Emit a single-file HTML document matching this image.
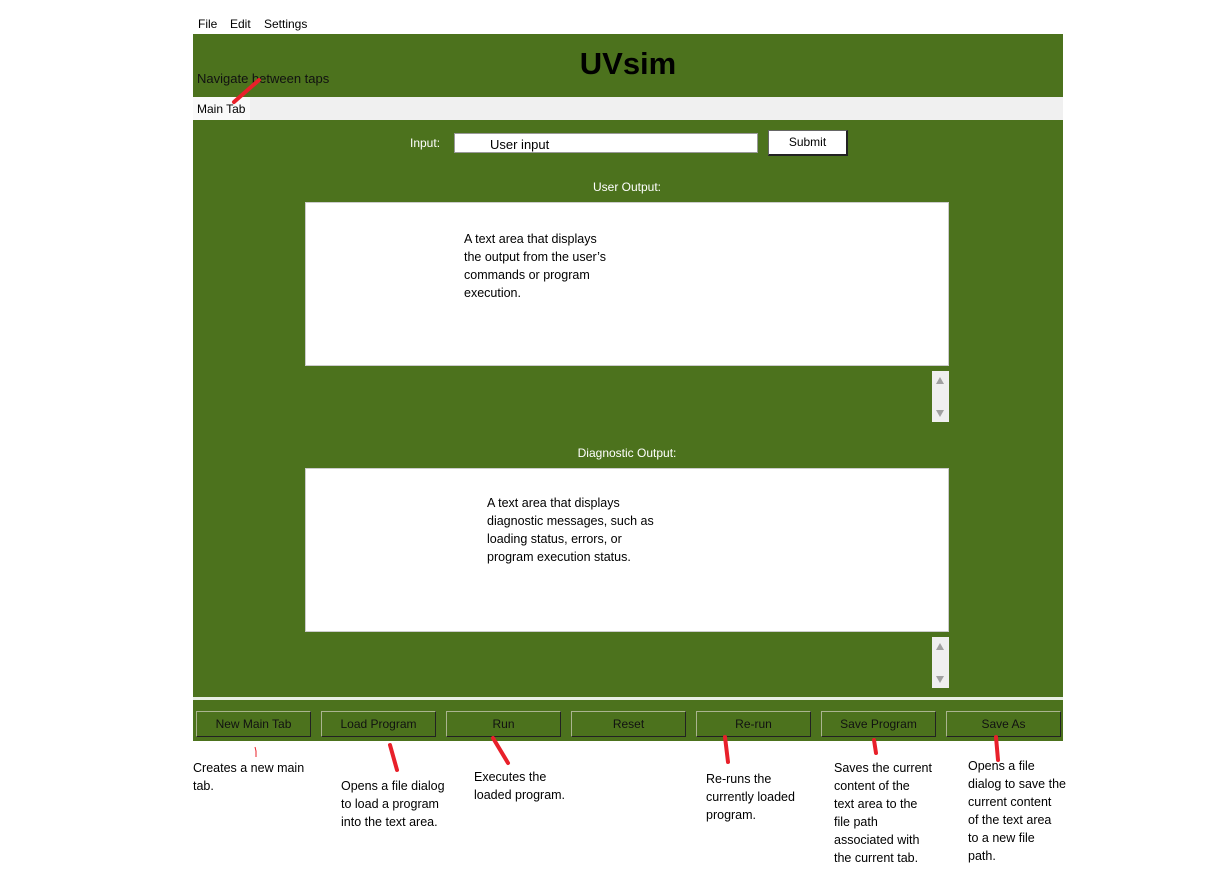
<!DOCTYPE html>
<html><head><meta charset="utf-8"><style>
body{margin:0;width:1228px;height:878px;background:#fff;position:relative;overflow:hidden;font-family:"Liberation Sans",sans-serif;}
div{position:absolute;box-sizing:border-box}
.g{background:#4c721d}
.t{font-size:12px;color:#000;white-space:nowrap}
.a{font-size:12.5px;line-height:18px;color:#000;white-space:nowrap}
.btn{top:711px;width:115px;height:26px;border:1px solid #222;border-top-color:#aab48f;border-left-color:#aab48f;background:#4c721d;font-size:12px;text-align:center;line-height:24px;color:#111}
.sb{width:17px;background:#efefef}
.up{left:4px;top:6px;width:0;height:0;border-left:4.5px solid transparent;border-right:4.5px solid transparent;border-bottom:7px solid #a0a0a0}
.dn{left:4px;bottom:5px;width:0;height:0;border-left:4.5px solid transparent;border-right:4.5px solid transparent;border-top:7px solid #a0a0a0}
</style></head><body>
<div style="left:193px;top:14px;width:870px;height:20px;background:#fff"></div>
<div class="t" style="left:198px;top:17px">File</div>
<div class="t" style="left:230px;top:17px">Edit</div>
<div class="t" style="left:264px;top:17px">Settings</div>
<div class="g" style="left:193px;top:34px;width:870px;height:63px"></div>
<div style="left:193px;top:46px;width:870px;text-align:center;font-size:31px;font-weight:bold;color:#000">UVsim</div>
<div style="left:197px;top:71px;font-size:13px;color:#111">Navigate between taps</div>
<div style="left:193px;top:97px;width:870px;height:23px;background:#f0f0f0"></div>
<div style="left:193px;top:97px;width:57px;height:23px;background:#f9f9f9"></div>
<div class="t" style="left:197px;top:102px">Main Tab</div>
<div class="g" style="left:193px;top:120px;width:870px;height:577px"></div>
<div class="t" style="left:410px;top:136px;color:#fff">Input:</div>
<div style="left:454px;top:133px;width:304px;height:20px;background:#fff;border:1px solid #999"></div>
<div style="left:490px;top:137px;font-size:13px">User input</div>
<div style="left:768px;top:130px;width:80px;height:26px;background:#fff;border:1px solid #666;border-right:2px solid #222;border-bottom:2px solid #222;font-size:12px;text-align:center;line-height:23px">Submit</div>
<div class="t" style="left:0;width:1254px;text-align:center;top:180px;color:#fff">User Output:</div>
<div style="left:305px;top:202px;width:644px;height:164px;background:#fff;border:1px solid #ccc"></div>
<div class="a" style="left:464px;top:230px">A text area that displays<br>the output from the user’s<br>commands or program<br>execution.</div>
<div class="sb" style="left:932px;top:371px;height:51px"><div class="up"></div><div class="dn"></div></div>
<div class="t" style="left:0;width:1254px;text-align:center;top:446px;color:#fff">Diagnostic Output:</div>
<div style="left:305px;top:468px;width:644px;height:164px;background:#fff;border:1px solid #ccc"></div>
<div class="a" style="left:487px;top:494px">A text area that displays<br>diagnostic messages, such as<br>loading status, errors, or<br>program execution status.</div>
<div class="sb" style="left:932px;top:637px;height:51px"><div class="up"></div><div class="dn"></div></div>
<div style="left:193px;top:697px;width:870px;height:3px;background:#e8eee4"></div>
<div class="g" style="left:193px;top:700px;width:870px;height:41px"></div>
<div class="btn" style="left:196px">New Main Tab</div>
<div class="btn" style="left:321px">Load Program</div>
<div class="btn" style="left:446px">Run</div>
<div class="btn" style="left:571px">Reset</div>
<div class="btn" style="left:696px">Re-run</div>
<div class="btn" style="left:821px">Save Program</div>
<div class="btn" style="left:946px">Save As</div>
<div class="a" style="left:193px;top:759px">Creates a new main<br>tab.</div>
<div class="a" style="left:341px;top:777px">Opens a file dialog<br>to load a program<br>into the text area.</div>
<div class="a" style="left:474px;top:768px">Executes the<br>loaded program.</div>
<div class="a" style="left:706px;top:770px">Re-runs the<br>currently loaded<br>program.</div>
<div class="a" style="left:834px;top:759px">Saves the current<br>content of the<br>text area to the<br>file path<br>associated with<br>the current tab.</div>
<div class="a" style="left:968px;top:757px">Opens a file<br>dialog to save the<br>current content<br>of the text area<br>to a new file<br>path.</div>
<svg style="position:absolute;left:0;top:0" width="1228" height="878">
<g stroke="#e8202a" stroke-width="4" stroke-linecap="round">
<line x1="259" y1="80" x2="234" y2="102"/>
<line x1="390" y1="745" x2="397" y2="770"/>
<line x1="493" y1="738" x2="508" y2="763"/>
<line x1="725" y1="737" x2="728" y2="762"/>
<line x1="874" y1="740" x2="876" y2="753"/>
<line x1="996" y1="737" x2="998" y2="760"/>
</g>
<path d="M255 747 l1 4 v6" stroke="#e8202a" stroke-width="1" fill="none"/>
</svg>
</body></html>
